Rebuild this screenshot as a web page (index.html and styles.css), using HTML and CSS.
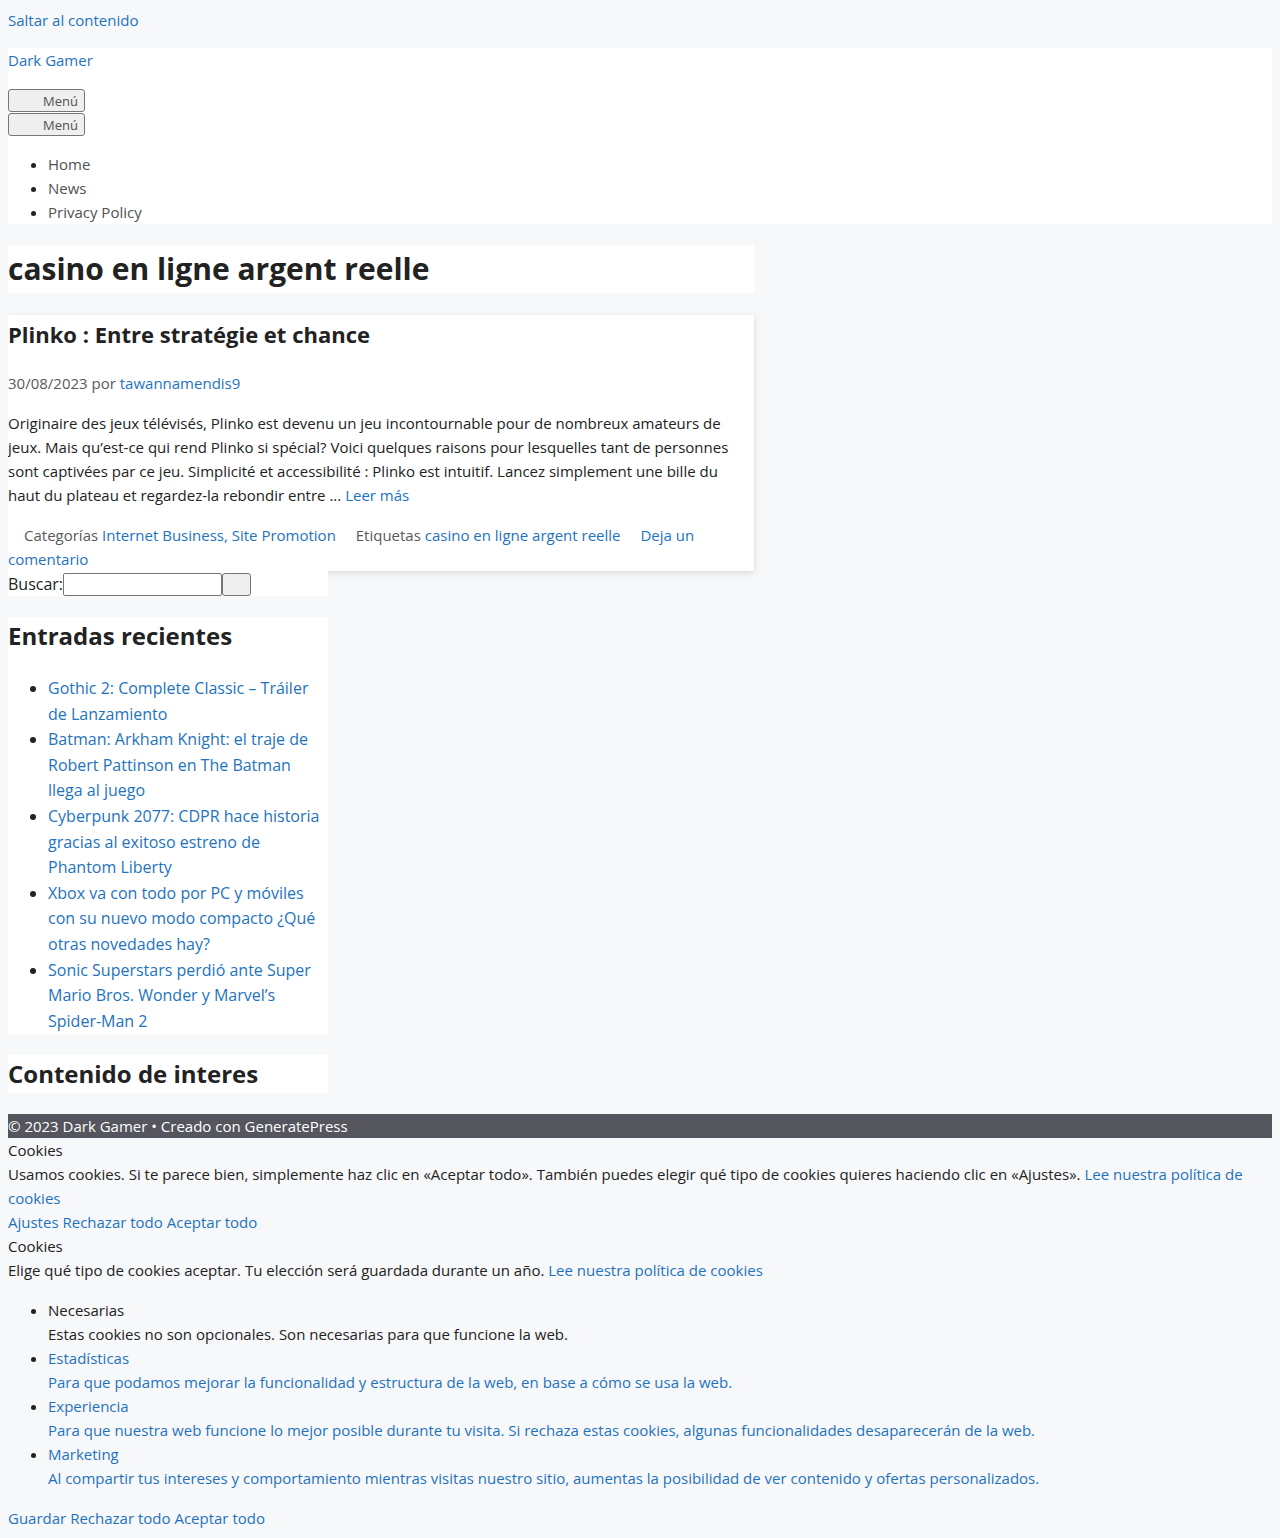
FILE: index.html
```html
<!DOCTYPE html>
<html lang="es">
<head>
<meta charset="utf-8">
<meta name="viewport" content="width=device-width, initial-scale=1">
<title>casino en ligne argent reelle – Dark Gamer</title>
<link rel="stylesheet" href="styles.css">
</head>
<body>
<a class="skip-link" href="#content">Saltar al contenido</a>

<header class="site-header">
  <p class="site-title"><a href="#">Dark Gamer</a></p>
  <div class="menu-row"><button class="menu-toggle" type="button">Menú</button></div>
  <nav>
    <div class="menu-row"><button class="menu-toggle" type="button">Menú</button></div>
    <ul class="main-nav">
      <li><a href="#">Home</a></li>
      <li><a href="#">News</a></li>
      <li><a href="#">Privacy Policy</a></li>
    </ul>
  </nav>
</header>

<main class="content" id="content">
  <h1 class="page-title">casino en ligne argent reelle</h1>
  <article class="post">
    <h2 class="post-title">Plinko : Entre stratégie et chance</h2>
    <div class="post-meta">30/08/2023 por <a href="#">tawannamendis9</a></div>
    <p class="post-summary">Originaire des jeux télévisés, Plinko est devenu un jeu incontournable pour de nombreux amateurs de jeux. Mais qu’est-ce qui rend Plinko si spécial? Voici quelques raisons pour lesquelles tant de personnes sont captivées par ce jeu. Simplicité et accessibilité : Plinko est intuitif. Lancez simplement une bille du haut du plateau et regardez-la rebondir entre ... <a href="#">Leer más</a></p>
    <footer class="post-footer">
      <span class="term">Categorías <a href="#">Internet Business, Site Promotion</a></span>
      <span class="term">Etiquetas <a href="#">casino en ligne argent reelle</a></span>
      <span class="term"><a href="#">Deja un comentario</a></span>
    </footer>
  </article>
</main>

<aside class="sidebar">
  <form class="widget search-form">
    <label for="search">Buscar:</label>
    <input class="search-field" id="search" type="search">
    <button class="search-submit" type="submit" aria-label="Buscar"></button>
  </form>
  <section class="widget">
    <h2 class="widget-title">Entradas recientes</h2>
    <ul class="recent-posts">
      <li><a href="#">Gothic 2: Complete Classic – Tráiler de Lanzamiento</a></li>
      <li><a href="#">Batman: Arkham Knight: el traje de Robert Pattinson en The Batman llega al juego</a></li>
      <li><a href="#">Cyberpunk 2077: CDPR hace historia gracias al exitoso estreno de Phantom Liberty</a></li>
      <li><a href="#">Xbox va con todo por PC y móviles con su nuevo modo compacto ¿Qué otras novedades hay?</a></li>
      <li><a href="#">Sonic Superstars perdió ante Super Mario Bros. Wonder y Marvel’s Spider-Man 2</a></li>
    </ul>
  </section>
  <section class="widget">
    <h2 class="widget-title">Contenido de interes</h2>
  </section>
</aside>

<footer class="site-info">© 2023 Dark Gamer • Creado con <a href="#">GeneratePress</a></footer>

<section class="cookies">
  <div>Cookies</div>
  <div>Usamos cookies. Si te parece bien, simplemente haz clic en «Aceptar todo». También puedes elegir qué tipo de cookies quieres haciendo clic en «Ajustes». <a href="#">Lee nuestra política de cookies</a></div>
  <div><a href="#">Ajustes</a> <a href="#">Rechazar todo</a> <a href="#">Aceptar todo</a></div>
</section>

<section class="cookies">
  <div>Cookies</div>
  <div>Elige qué tipo de cookies aceptar. Tu elección será guardada durante un año. <a href="#">Lee nuestra política de cookies</a></div>
  <ul class="cookie-types">
    <li>Necesarias<div>Estas cookies no son opcionales. Son necesarias para que funcione la web.</div></li>
    <li><a href="#">Estadísticas<br>Para que podamos mejorar la funcionalidad y estructura de la web, en base a cómo se usa la web.</a></li>
    <li><a href="#">Experiencia<br>Para que nuestra web funcione lo mejor posible durante tu visita. Si rechaza estas cookies, algunas funcionalidades desaparecerán de la web.</a></li>
    <li><a href="#">Marketing<br>Al compartir tus intereses y comportamiento mientras visitas nuestro sitio, aumentas la posibilidad de ver contenido y ofertas personalizados.</a></li>
  </ul>
  <div><a href="#">Guardar</a> <a href="#">Rechazar todo</a> <a href="#">Aceptar todo</a></div>
</section>
</body>
</html>
```
FILE: styles.css
```css
* {
  box-sizing: border-box;
}

body {
  margin: 8px;
  background: #f7f8f9;
  color: #222;
  font-family: "Segoe UI", "Open Sans", "Noto Sans", sans-serif;
  font-size: 15px;
  line-height: 24px;
}

h1,
h2 {
  font-weight: 700;
}

a {
  color: #1e73be;
  text-decoration: none;
}

ul {
  margin: 16px 0 0;
  padding-left: 40px;
}

.skip-link {
  display: block;
  margin-bottom: 16px;
}

.site-header {
  background: #fff;
}

.site-title {
  margin: 0 0 16px;
}

.menu-row {
  display: flex;
  align-items: center;
  height: 24px;
}

.menu-toggle {
  height: 23px;
  padding: 1px 6px 0 34px;
  border: 1px solid #767676;
  border-radius: 3px;
  background: #efefef;
  color: #515151;
  font-family: inherit;
  font-size: 13px;
  line-height: 20px;
}

.main-nav a {
  color: #515151;
}

.content {
  width: 59%;
}

.page-title {
  margin: 21px 0 22px;
  background: #fff;
  font-size: 30px;
  line-height: 48px;
}

.post {
  background: #fff;
  box-shadow: 0 2px 5px rgba(0, 0, 0, 0.08), 0 2px 10px rgba(0, 0, 0, 0.06);
}

.post-title {
  margin: 0 0 18px;
  font-size: 22px;
  line-height: 38px;
}

.post-meta,
.post-footer {
  color: #595959;
}

.post-summary {
  margin: 16px 0;
}

.term::before {
  content: "";
  display: inline-block;
  width: 16px;
}

.sidebar {
  width: 320px;
  font-size: 16px;
  line-height: 1.6;
}

.widget {
  margin-bottom: 21px;
  background: #fff;
}

.search-form {
  display: flex;
  align-items: flex-end;
  height: 25px;
}

.search-form label {
  line-height: 24px;
}

.search-field {
  width: 159px;
  height: 23px;
  border: 1px solid #767676;
  border-radius: 2px;
  background: #fff;
  font: inherit;
}

.search-submit {
  width: 29px;
  height: 23px;
  border: 1px solid #767676;
  border-radius: 3px;
  background: #efefef;
}

.widget-title {
  margin: 0;
  font-size: 24px;
  line-height: 38px;
}

.recent-posts {
  margin-top: 21px;
}

.site-info {
  background: #55555e;
  color: #fff;
}

.site-info a {
  color: #fff;
}

.cookie-types {
  margin: 16px 0;
}
```
